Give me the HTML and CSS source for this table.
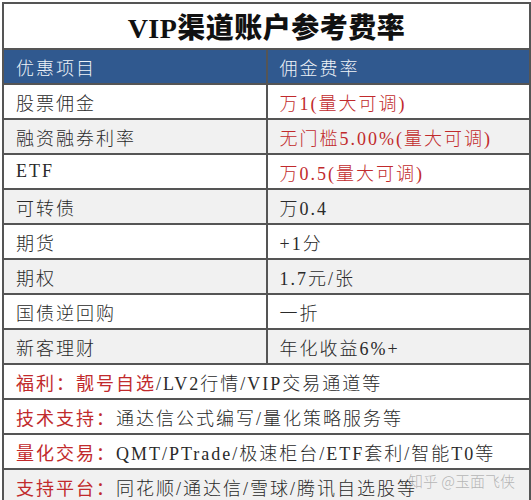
FILE: index.html
```html
<!DOCTYPE html>
<html lang="zh-CN">
<head>
  <meta charset="UTF-8">
  <meta name="viewport" content="width=device-width, initial-scale=1.0">
  <title>VIP渠道账户参考费率</title>
  <link rel="stylesheet" href="styles.css">
</head>
<body>
  <div class="sheet">
    <table class="rate-table">
      <tr>
        <th colspan="2" class="title">VIP渠道账户参考费率</th>
      </tr>
      <tr class="head">
        <td class="col-left">优惠项目</td>
        <td>佣金费率</td>
      </tr>
      <tr>
        <td>股票佣金</td>
        <td class="red">万1(量大可调)</td>
      </tr>
      <tr class="grey">
        <td>融资融券利率</td>
        <td class="red">无门槛5.00%(量大可调)</td>
      </tr>
      <tr>
        <td>ETF</td>
        <td class="red">万0.5(量大可调)</td>
      </tr>
      <tr class="grey">
        <td>可转债</td>
        <td>万0.4</td>
      </tr>
      <tr>
        <td>期货</td>
        <td>+1分</td>
      </tr>
      <tr class="grey">
        <td>期权</td>
        <td>1.7元/张</td>
      </tr>
      <tr>
        <td>国债逆回购</td>
        <td>一折</td>
      </tr>
      <tr class="grey">
        <td>新客理财</td>
        <td>年化收益6%+</td>
      </tr>
      <tr>
        <td colspan="2"><span class="red">福利：靓号自选</span>/LV2行情/VIP交易通道等</td>
      </tr>
      <tr>
        <td colspan="2"><span class="red">技术支持：</span>通达信公式编写/量化策略服务等</td>
      </tr>
      <tr>
        <td colspan="2"><span class="red">量化交易：</span>QMT/PTrade/极速柜台/ETF套利/智能T0等</td>
      </tr>
      <tr class="grey">
        <td colspan="2"><span class="red">支持平台：</span>同花顺/通达信/雪球/腾讯自选股等</td>
      </tr>
    </table>
    <div class="watermark">知乎 @玉面飞侠</div>
  </div>
</body>
</html>
```

FILE: styles.css
```css
body {
  margin: 0;
  background: white;
  font-family: "Liberation Serif", "Noto Sans CJK SC", serif;
  color: #2a2a2a;
}
.sheet {
  position: relative;
  padding: 2px 0 0 2px;
  width: 529px;
}
.rate-table {
  width: 529px;
  border-collapse: collapse;
  table-layout: fixed;
}
.rate-table td,
.rate-table th {
  border: 2px solid #555;
  height: 33px;
  padding: 0 0 0 12px;
  font-size: 18px;
  font-weight: 300;
  letter-spacing: 2px;
  text-align: left;
  white-space: nowrap;
}
.rate-table .title {
  height: 44px;
  padding: 0;
  text-align: center;
  font-size: 28px;
  font-weight: 900;
  letter-spacing: 0.5px;
  color: #111;
}
.col-left {
  width: 250px;
}
.head td {
  background-color: #30598f;
  color: #eef2f7;
}
.grey td {
  background-color: #f1f1f1;
}
.red {
  color: #c12a2c;
  font-weight: 400;
}
.watermark {
  position: absolute;
  left: 408px;
  top: 470px;
  white-space: nowrap;
  font-family: "Noto Sans CJK SC", sans-serif;
  font-size: 15px;
  font-weight: 300;
  color: rgba(165, 165, 165, 0.8);
}
```
